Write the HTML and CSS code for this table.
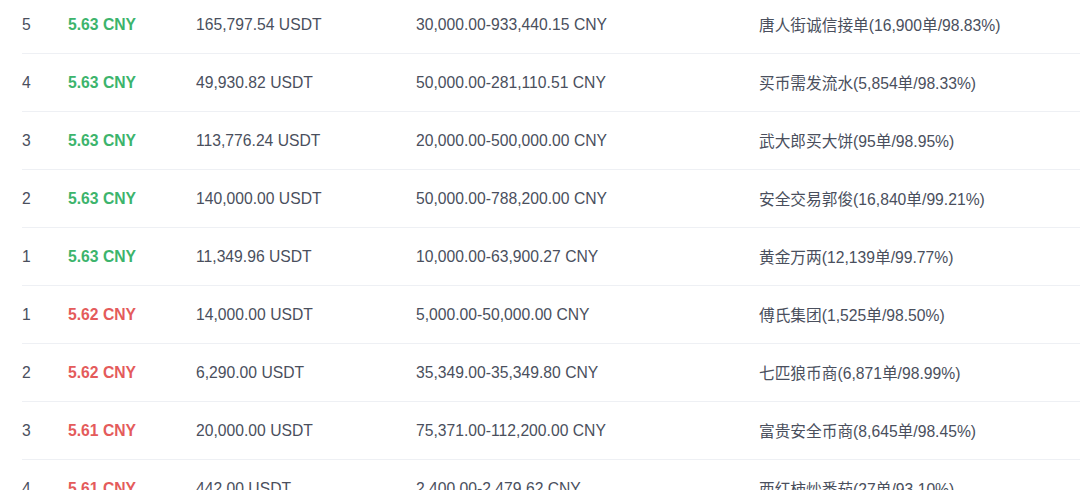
FILE: index.html
```html
<!DOCTYPE html>
<html lang="zh">
<head>
<meta charset="utf-8">
<link rel="stylesheet" href="styles.css">
</head>
<body>
<div class="list">
  <div class="row"><span class="no">5</span><span class="price up">5.63 CNY</span><span class="amt">165,797.54 USDT</span><span class="lim">30,000.00-933,440.15 CNY</span><span class="merchant">唐人街诚信接单(16,900单/98.83%)</span></div>
  <div class="row"><span class="no">4</span><span class="price up">5.63 CNY</span><span class="amt">49,930.82 USDT</span><span class="lim">50,000.00-281,110.51 CNY</span><span class="merchant">买币需发流水(5,854单/98.33%)</span></div>
  <div class="row"><span class="no">3</span><span class="price up">5.63 CNY</span><span class="amt">113,776.24 USDT</span><span class="lim">20,000.00-500,000.00 CNY</span><span class="merchant">武大郎买大饼(95单/98.95%)</span></div>
  <div class="row"><span class="no">2</span><span class="price up">5.63 CNY</span><span class="amt">140,000.00 USDT</span><span class="lim">50,000.00-788,200.00 CNY</span><span class="merchant">安全交易郭俊(16,840单/99.21%)</span></div>
  <div class="row"><span class="no">1</span><span class="price up">5.63 CNY</span><span class="amt">11,349.96 USDT</span><span class="lim">10,000.00-63,900.27 CNY</span><span class="merchant">黄金万两(12,139单/99.77%)</span></div>
  <div class="row"><span class="no">1</span><span class="price down">5.62 CNY</span><span class="amt">14,000.00 USDT</span><span class="lim">5,000.00-50,000.00 CNY</span><span class="merchant">傅氏集团(1,525单/98.50%)</span></div>
  <div class="row"><span class="no">2</span><span class="price down">5.62 CNY</span><span class="amt">6,290.00 USDT</span><span class="lim">35,349.00-35,349.80 CNY</span><span class="merchant">七匹狼币商(6,871单/98.99%)</span></div>
  <div class="row"><span class="no">3</span><span class="price down">5.61 CNY</span><span class="amt">20,000.00 USDT</span><span class="lim">75,371.00-112,200.00 CNY</span><span class="merchant">富贵安全币商(8,645单/98.45%)</span></div>
  <div class="row"><span class="no">4</span><span class="price down">5.61 CNY</span><span class="amt">442.00 USDT</span><span class="lim">2,400.00-2,479.62 CNY</span><span class="merchant">西红柿炒番茄(27单/93.10%)</span></div>
</div>
</body>
</html>
```

FILE: styles.css
```css
html, body {
  margin: 0;
  padding: 0;
  background: #ffffff;
  overflow: hidden;
}
body {
  font-family: "Liberation Sans", Arial, "Noto Sans CJK SC", sans-serif;
  font-size: 15.7px;
  color: #4a4f5d;
}
.list {
  margin-top: -4px;
  padding-left: 22px;
}
.row {
  display: grid;
  grid-template-columns: 46px 128px 220px 343px 1fr;
  align-items: center;
  height: 57px;
  border-bottom: 1px solid #eef0f4;
  white-space: nowrap;
}
.price {
  font-weight: bold;
}
.up { color: #3cb46c; }
.down { color: #e45b5b; }
.merchant {
  font-family: "Liberation Sans", "Noto Sans CJK SC", sans-serif;
}
```
